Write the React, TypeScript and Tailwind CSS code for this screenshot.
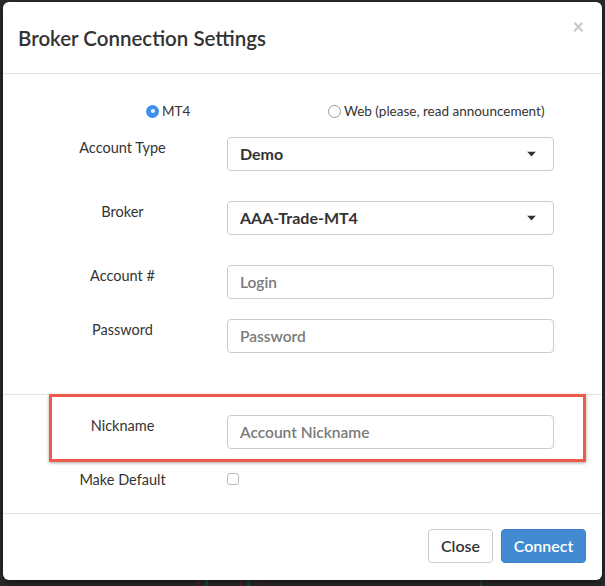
import React from "react";

const font = { fontFamily: 'Lato, "Noto Sans", sans-serif' };

function Caret() {
  return (
    <svg width="9" height="5" viewBox="0 0 9 5" className="absolute right-[17px] top-1/2 -translate-y-1/2">
      <path d="M0 0h9L4.5 5z" fill="#333" />
    </svg>
  );
}

function Row({ label, children, className = "" }: { label: string; children: React.ReactNode; className?: string }) {
  return (
    <div className={`flex items-start ${className}`}>
      <div className="w-[179px] ml-[30px] text-center text-[14.5px] text-[#333]">{label}</div>
      <div className="ml-[15px] w-[327px]">{children}</div>
    </div>
  );
}

function Select({ value }: { value: string }) {
  return (
    <div className="relative h-[34px] rounded-[4px] border border-[#ccc] bg-white pl-[12px] flex items-center text-[16px] font-bold text-[#333]">
      {value}
      <Caret />
    </div>
  );
}

function Input({ placeholder }: { placeholder: string }) {
  return (
    <input
      placeholder={placeholder}
      className="h-[34px] w-full rounded-[4px] border border-[#ccc] bg-white pl-[12px] text-[15.5px] font-semibold text-[#333] placeholder:text-[#7a7a7a] outline-none"
      style={font}
    />
  );
}

export default function App() {
  return (
    <div className="relative w-[605px] h-[586px] overflow-hidden bg-[#2a2a2a] pt-[2px] px-[3px]" style={font}>
      <div className="absolute bottom-0 left-[197px] w-[3px] h-[6px] bg-[#5a1d1d]" />
      <div className="absolute bottom-0 left-[205px] w-[3px] h-[6px] bg-[#1d4a3a]" />
      <div className="absolute bottom-0 left-[240px] w-[2px] h-[6px] bg-[#5a1d1d]" />
      <div className="absolute bottom-0 left-[247px] w-[3px] h-[6px] bg-[#1d4a3a]" />
      <div className="absolute bottom-0 left-[260px] w-[2px] h-[6px] bg-[#5a1d1d]" />
      <div className="absolute bottom-0 left-[480px] w-[2px] h-[6px] bg-[#1d4a3a]" />

      <div className="relative h-[578px] rounded-[6px] bg-white shadow-[0_3px_9px_rgba(0,0,0,0.5)] flex flex-col">
        <div className="h-[72px] border-b border-[#e5e5e5] flex items-center justify-between pl-[15px] pr-[18px]">
          <h1 className="text-[20.5px] font-semibold text-[#333] mt-[1px]">Broker Connection Settings</h1>
          <span className="text-[20px] font-bold text-[#c8c8c8] -mt-[24px] leading-none">×</span>
        </div>

        <div className="h-[321px] border-b border-[#e5e5e5] pt-[29px]">
          <div className="flex items-center text-[13.5px] text-[#333] h-[16px]">
            <label className="ml-[143px] w-[182px] flex items-center">
              <span className="w-[13px] h-[13px] rounded-full bg-[#3d8ff0] flex items-center justify-center">
                <span className="w-[4px] h-[4px] rounded-full bg-white" />
              </span>
              <span className="ml-[3px]">MT4</span>
            </label>
            <label className="flex items-center">
              <span className="w-[13px] h-[13px] rounded-full border border-[#999] bg-white" />
              <span className="ml-[3px]">Web (please, read announcement)</span>
            </label>
          </div>

          <Row label="Account Type" className="mt-[18px]">
            <Select value="Demo" />
          </Row>
          <Row label="Broker" className="mt-[30px]">
            <Select value="AAA-Trade-MT4" />
          </Row>
          <Row label="Account #" className="mt-[30px]">
            <Input placeholder="Login" />
          </Row>
          <Row label="Password" className="mt-[20px]">
            <Input placeholder="Password" />
          </Row>
        </div>

        <div className="relative h-[119px] border-b border-[#e5e5e5] pt-[20px]">
          <Row label="Nickname">
            <Input placeholder="Account Nickname" />
          </Row>
          <Row label="Make Default" className="mt-[20px]">
            <span className="block w-[12px] h-[12px] mt-[4px] rounded-[3px] border border-[#bbb] bg-white" />
          </Row>
          <div className="absolute left-[46px] top-[-1px] w-[537px] h-[68px] border-[3px] border-[#ef5a4c] shadow-[0_1px_3px_rgba(0,0,0,0.35)]" />
        </div>

        <div className="flex-1 flex items-start justify-end gap-[8px] pt-[15px] pr-[16px]">
          <button className="h-[34px] w-[65px] rounded-[4px] border border-[#ccc] bg-white text-[16px] font-semibold text-[#333]">Close</button>
          <button className="h-[34px] w-[85px] rounded-[4px] border border-[#3a7fc8] bg-[#428bd2] text-[16px] font-semibold text-white">Connect</button>
        </div>
      </div>
    </div>
  );
}
